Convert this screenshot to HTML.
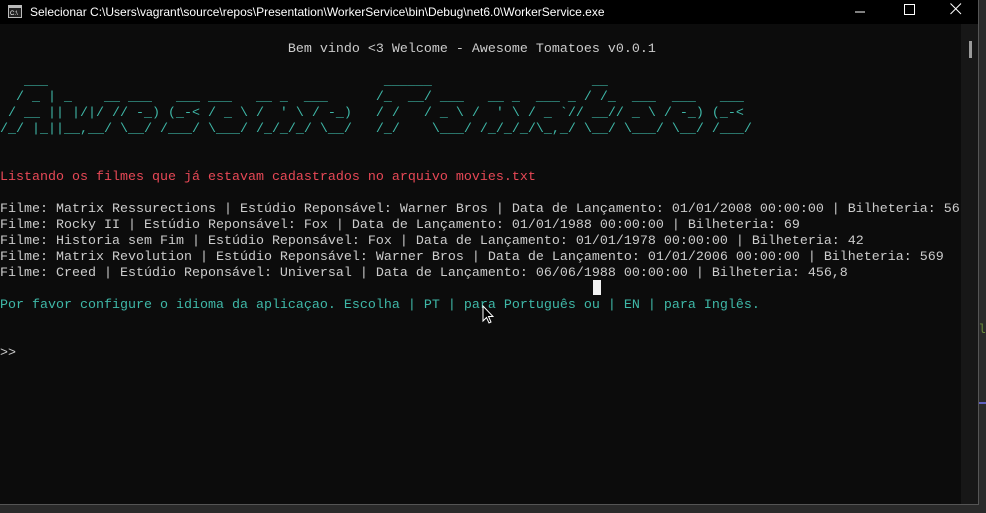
<!DOCTYPE html>
<html><head><meta charset="utf-8"><style>
*{margin:0;padding:0}
body{width:986px;height:513px;background:#2a2a2a;position:relative;overflow:hidden}
#win{position:absolute;left:0;top:0;width:978px;height:504px;background:#0c0c0c;border-right:1px solid #555;border-bottom:1px solid #555}
#tb{position:absolute;left:0;top:0;width:978px;height:24px;background:#000;color:#fff;font:12px "Liberation Sans",sans-serif}
#tb .t{position:absolute;left:30px;top:5px;white-space:nowrap}
#con{position:absolute;left:0;top:26px;font:13.33px/16px "Liberation Mono",monospace;color:#cccccc;white-space:pre}
.r{color:#e74856}.c{color:#3fb8a8}
#sb{position:absolute;left:961px;top:24px;width:17px;height:480px;background:#171717}
#th{position:absolute;left:969px;top:41px;width:3px;height:17px;background:#9a9a9a}
</style></head><body>
<div id="win">
<div id="tb">
<svg style="position:absolute;left:8px;top:5px" width="14" height="13"><rect x="0.5" y="0.5" width="13" height="12" fill="#222" stroke="#bbb"/><rect x="1" y="1" width="12" height="2" fill="#bbb"/><text x="2" y="10" font-size="6" fill="#fff" font-family="Liberation Sans">C:\</text></svg>
<span class="t">Selecionar C:\Users\vagrant\source\repos\Presentation\WorkerService\bin\Debug\net6.0\WorkerService.exe</span>
<svg style="position:absolute;left:853px;top:4px" width="14" height="14"><line x1="2" y1="8" x2="12" y2="8" stroke="#fff"/></svg>
<svg style="position:absolute;left:903px;top:3px" width="14" height="14"><rect x="1.5" y="1.5" width="10" height="10" fill="none" stroke="#fff"/></svg>
<svg style="position:absolute;left:949px;top:2px" width="14" height="14"><path d="M1.5 1.5L12 12M12 1.5L1.5 12" stroke="#fff"/></svg>
</div>
<div id="sb"><div id="th" style="top:17px;left:8px"></div></div>
<div id="con">
                                    Bem vindo &lt;3 Welcome - Awesome Tomatoes v0.0.1

<span class="c">   ___                                          ______                    __
  / _ | _    __ ___   ___ ___   __ _  ___      /_  __/ ___   __ _  ___ _ / /_  ___  ___   ___
 / __ || |/|/ // -_) (_-&lt; / _ \ /  ' \ / -_)   / /   / _ \ /  ' \ / _ `// __// _ \ / -_) (_-&lt;
/_/ |_||__,__/ \__/ /___/ \___/ /_/_/_/ \__/   /_/    \___/ /_/_/_/\_,_/ \__/ \___/ \__/ /___/</span>


<span class="r">Listando os filmes que já estavam cadastrados no arquivo movies.txt</span>

Filme: Matrix Ressurections | Estúdio Reponsável: Warner Bros | Data de Lançamento: 01/01/2008 00:00:00 | Bilheteria: 56
Filme: Rocky II | Estúdio Reponsável: Fox | Data de Lançamento: 01/01/1988 00:00:00 | Bilheteria: 69
Filme: Historia sem Fim | Estúdio Reponsável: Fox | Data de Lançamento: 01/01/1978 00:00:00 | Bilheteria: 42
Filme: Matrix Revolution | Estúdio Reponsável: Warner Bros | Data de Lançamento: 01/01/2006 00:00:00 | Bilheteria: 569
Filme: Creed | Estúdio Reponsável: Universal | Data de Lançamento: 06/06/1988 00:00:00 | Bilheteria: 456,8

<span class="c">Por favor configure o idioma da aplicaçao. Escolha | PT | para Português ou | EN | para Inglês.</span>


&gt;&gt;</div>
<div style="position:absolute;left:593px;top:280px;width:8px;height:15px;background:#f2f2f2"></div>
<svg style="position:absolute;left:482px;top:305px" width="12" height="20"><path d="M1 1L1 16L4.5 12.5L7 18L9 17L6.5 11.5L11 11.5Z" fill="#000" stroke="#fff" stroke-width="1"/></svg>
</div>
<div style="position:absolute;left:979px;top:322px;width:7px;height:12px;color:#6a8a3a;font:12px monospace">l</div>
<div style="position:absolute;left:979px;top:402px;width:7px;height:2px;background:#6060c0"></div>
</body></html>
